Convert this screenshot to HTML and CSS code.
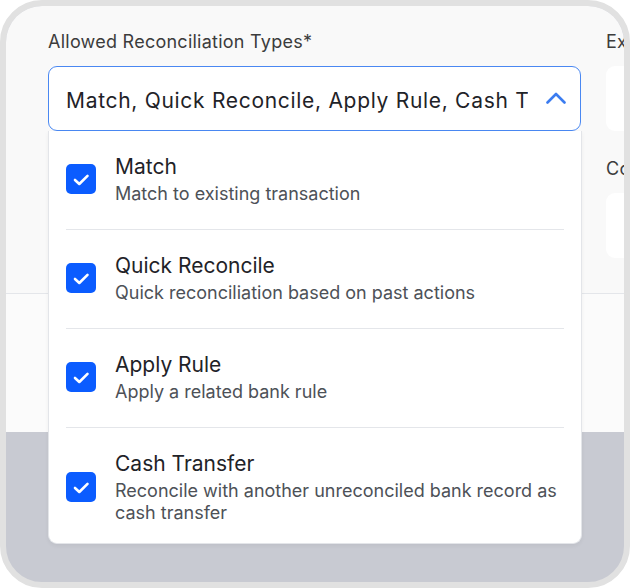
FILE: index.html
```html
<!DOCTYPE html>
<html lang="en">
<head>
<meta charset="utf-8">
<title>Allowed Reconciliation Types</title>
<link rel="stylesheet" href="styles.css">
</head>
<body>
<div class="frame">
  <div class="top">
    <div class="field main-field">
      <div class="label">Allowed Reconciliation Types*</div>
      <div class="select">
        <span class="select-value">Match, Quick Reconcile, Apply Rule, Cash Transfer</span>
        <svg class="chevron" width="20" height="12" viewBox="0 0 20 12"><path d="M1.5 10.5 L10 2 L18.5 10.5" fill="none" stroke="#3b7cf0" stroke-width="2.6" stroke-linecap="round" stroke-linejoin="round"/></svg>
      </div>
    </div>
    <div class="side">
      <div class="field">
        <div class="label">Expiry</div>
        <div class="input"></div>
      </div>
      <div class="field">
        <div class="label">Comment</div>
        <div class="input"></div>
      </div>
    </div>
  </div>
  <div class="mid"></div>
  <div class="backdrop"></div>

  <div class="menu">
    <div class="option">
      <span class="checkbox"><svg width="30" height="30" viewBox="0 0 30 30"><path d="M9 16 L13.3 20 L21.5 11.8" fill="none" stroke="#fff" stroke-width="2.6" stroke-linecap="round" stroke-linejoin="round"/></svg></span>
      <div class="option-text">
        <div class="option-title">Match</div>
        <div class="option-desc">Match to existing transaction</div>
      </div>
    </div>
    <div class="option">
      <span class="checkbox"><svg width="30" height="30" viewBox="0 0 30 30"><path d="M9 16 L13.3 20 L21.5 11.8" fill="none" stroke="#fff" stroke-width="2.6" stroke-linecap="round" stroke-linejoin="round"/></svg></span>
      <div class="option-text">
        <div class="option-title">Quick Reconcile</div>
        <div class="option-desc">Quick reconciliation based on past actions</div>
      </div>
    </div>
    <div class="option">
      <span class="checkbox"><svg width="30" height="30" viewBox="0 0 30 30"><path d="M9 16 L13.3 20 L21.5 11.8" fill="none" stroke="#fff" stroke-width="2.6" stroke-linecap="round" stroke-linejoin="round"/></svg></span>
      <div class="option-text">
        <div class="option-title">Apply Rule</div>
        <div class="option-desc">Apply a related bank rule</div>
      </div>
    </div>
    <div class="option">
      <span class="checkbox"><svg width="30" height="30" viewBox="0 0 30 30"><path d="M9 16 L13.3 20 L21.5 11.8" fill="none" stroke="#fff" stroke-width="2.6" stroke-linecap="round" stroke-linejoin="round"/></svg></span>
      <div class="option-text">
        <div class="option-title">Cash Transfer</div>
        <div class="option-desc">Reconcile with another unreconciled bank record as cash transfer</div>
      </div>
    </div>
  </div>
</div>
</body>
</html>
```

FILE: styles.css
```css
* { box-sizing: border-box; }

html, body {
  margin: 0;
  padding: 0;
  background: #ffffff;
}

body {
  font-family: "Inter", "Noto Sans", sans-serif;
  color: #1f2328;
}

.frame {
  position: relative;
  width: 630px;
  height: 588px;
  border: 6px solid #e1e1e1;
  border-radius: 42px;
  overflow: hidden;
  background: #c8cad2;
  display: flex;
  flex-direction: column;
}

.top {
  height: 288px;
  flex: none;
  background: #f9f9f9;
  border-bottom: 1px solid #e4e6ea;
  display: flex;
  gap: 25px;
  padding: 25px 0 0 42px;
  overflow: hidden;
}

.mid {
  height: 138px;
  flex: none;
  background: #fbfbfb;
}

.backdrop {
  flex: 1;
}

.field {
  display: flex;
  flex-direction: column;
  gap: 14px;
}

.main-field {
  width: 533px;
  flex: none;
}

.label {
  font-size: 18px;
  line-height: 21px;
  letter-spacing: 0.25px;
  color: #3c3c3c;
  white-space: nowrap;
}

.select {
  height: 65px;
  border: 1px solid #4a88f2;
  border-radius: 9px;
  background: #ffffff;
  display: flex;
  align-items: center;
  padding: 3px 14px 0 17px;
  gap: 18px;
}

.select-value {
  flex: 1;
  min-width: 0;
  overflow: hidden;
  white-space: nowrap;
  font-size: 21px;
  letter-spacing: 0.7px;
  color: #1f2328;
}

.chevron {
  flex: none;
  margin-top: -5px;
}

.side {
  flex: none;
  width: 120px;
  display: flex;
  flex-direction: column;
  gap: 27px;
}

.input {
  height: 65px;
  background: #ffffff;
  border-radius: 9px;
}

.menu {
  position: absolute;
  top: 125px;
  left: 42px;
  width: 534px;
  height: 413px;
  background: #ffffff;
  border: 1px solid #e3e5e9;
  border-top: none;
  border-radius: 0 0 9px 9px;
  box-shadow: 0 2px 4px rgba(0, 0, 0, 0.05);
  padding: 0 17px;
  display: flex;
  flex-direction: column;
}

.option {
  display: flex;
  align-items: center;
  gap: 19px;
  padding: 22px 0 24px;
  border-bottom: 1px solid #e4e6ea;
}

.option:last-child {
  border-bottom: none;
  padding-bottom: 20px;
}

.checkbox {
  flex: none;
  width: 30px;
  height: 30px;
  border-radius: 5px;
  background: #0b5cff;
  display: block;
}

.checkbox svg {
  display: block;
}

.option-text {
  display: flex;
  flex-direction: column;
  gap: 2px;
}

.option-title {
  font-size: 21px;
  line-height: 28px;
  color: #1f2328;
}

.option-desc {
  font-size: 18px;
  line-height: 22px;
  color: #4d5157;
}
```
